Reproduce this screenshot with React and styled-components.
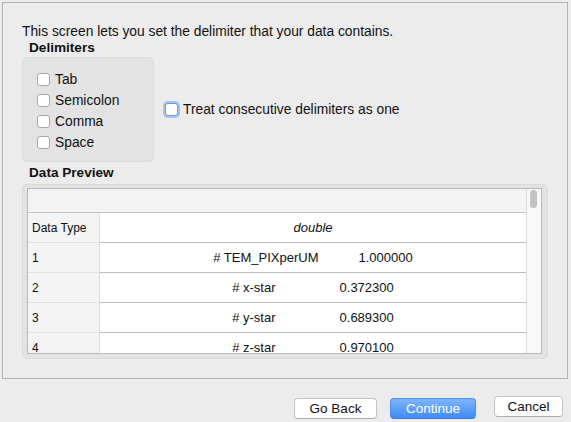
import React from 'react';
import styled, { createGlobalStyle } from 'styled-components';

const GlobalStyle = createGlobalStyle`
  html, body {
    margin: 0;
    padding: 0;
    background: #ececec;
    font-family: "Liberation Sans", Arial, sans-serif;
    color: #111;
  }
`;

const Page = styled.div`
  width: 571px;
  height: 422px;
  overflow: hidden;
  padding: 2px 0 0 2px;
  box-sizing: border-box;
`;

const Panel = styled.div`
  box-sizing: border-box;
  width: 566px;
  height: 377px;
  border: 1px solid #b3b3b3;
  padding: 21px 0 0 19px;
  display: flex;
  flex-direction: column;
`;

const Intro = styled.div`
  font-size: 13.8px;
  line-height: 16px;
`;

const SectionLabel = styled.div`
  font-size: 13.6px;
  font-weight: bold;
  line-height: 16px;
  padding-left: 7px;
`;

const OptionsRow = styled.div`
  display: flex;
  align-items: center;
  margin-top: 1px;
`;

const DelimBox = styled.div`
  box-sizing: border-box;
  width: 132px;
  height: 105px;
  background: #e3e3e3;
  border: 1px solid #dcdcdc;
  border-radius: 5px;
  padding: 15px 0 0 14px;
  display: flex;
  flex-direction: column;
  gap: 8px;
`;

const CheckRow = styled.label`
  display: flex;
  align-items: center;
  gap: 5px;
  font-size: 13.8px;
  line-height: 13px;
  margin-left: ${(p) => p.$indent || 0}px;
`;

const Box = styled.span`
  box-sizing: border-box;
  width: 13px;
  height: 13px;
  background: #fff;
  border: 1px solid ${(p) => (p.$focus ? '#6d9be0' : '#a9a9a9')};
  border-radius: 3px;
  box-shadow: ${(p) => (p.$focus ? '0 0 0 2px rgba(110, 160, 235, 0.55)' : 'none')};
  flex-shrink: 0;
`;

const PreviewLabel = styled(SectionLabel)`
  margin-top: 3px;
`;

const PreviewBox = styled.div`
  box-sizing: border-box;
  width: 526px;
  height: 175px;
  margin-top: 3px;
  background: #e3e3e3;
  border: 1px solid #dadada;
  border-radius: 5px;
  padding: 3px 5px 4px 4px;
`;

const Table = styled.div`
  box-sizing: border-box;
  height: 100%;
  border: 1px solid #b9b9b9;
  display: grid;
  grid-template-columns: 1fr 15px;
  background: #fff;
  overflow: hidden;
`;

const Main = styled.div`
  display: flex;
  flex-direction: column;
  overflow: hidden;
`;

const HeaderRow = styled.div`
  height: 23px;
  flex-shrink: 0;
  background: #f3f3f3;
  border-bottom: 1px solid #c4c4c4;
`;

const Row = styled.div`
  display: grid;
  grid-template-columns: 72px 1fr;
  height: 30px;
  flex-shrink: 0;
`;

const RowHead = styled.div`
  background: #f4f4f4;
  border-right: 1px solid #dedede;
  border-bottom: 1px solid #e2e2e2;
  padding-left: 4px;
  display: flex;
  align-items: center;
  font-size: 12px;
`;

const Cell = styled.div`
  border-bottom: 1px solid #bdbdbd;
  display: flex;
  align-items: center;
  justify-content: center;
  font-size: 13px;
  font-style: ${(p) => (p.$italic ? 'italic' : 'normal')};
`;

const Value = styled.span`
  margin-left: ${(p) => p.$gap}px;
`;

const Scroll = styled.div`
  background: #f8f8f8;
  border-left: 1px solid #dcdcdc;
  padding: 1px 0 0 3px;
`;

const Thumb = styled.div`
  width: 7px;
  height: 18px;
  border-radius: 4px;
  background: #c2c2c2;
`;

const Footer = styled.div`
  display: flex;
  justify-content: flex-end;
  align-items: flex-start;
  padding: 17px 8px 0 0;
`;

const Button = styled.button`
  box-sizing: border-box;
  height: 21px;
  width: ${(p) => p.$w}px;
  margin-top: ${(p) => p.$drop || 0}px;
  margin-left: ${(p) => p.$ml || 0}px;
  padding: 0;
  font-family: "Liberation Sans", Arial, sans-serif;
  font-size: 13.5px;
  border-radius: 4px;
  border: 1px solid ${(p) => (p.$primary ? '#4f8ef0' : '#c4c4c4')};
  border-bottom-color: ${(p) => (p.$primary ? '#3b7be6' : '#aeaeae')};
  background: ${(p) => (p.$primary ? 'linear-gradient(#7fb4fb, #3f8cf4)' : '#fff')};
  color: ${(p) => (p.$primary ? '#fff' : '#111')};
`;

const delimiters = ['Tab', 'Semicolon', 'Comma', 'Space'];

const rows = [
  { n: '1', name: '# TEM_PIXperUM', value: '1.000000', gap: 40 },
  { n: '2', name: '# x-star', value: '0.372300', gap: 64 },
  { n: '3', name: '# y-star', value: '0.689300', gap: 64 },
  { n: '4', name: '# z-star', value: '0.970100', gap: 64 },
];

const App = () => (
  <Page>
    <GlobalStyle />
    <Panel>
      <Intro>This screen lets you set the delimiter that your data contains.</Intro>
      <SectionLabel>Delimiters</SectionLabel>
      <OptionsRow>
        <DelimBox>
          {delimiters.map((d) => (
            <CheckRow key={d}>
              <Box />
              {d}
            </CheckRow>
          ))}
        </DelimBox>
        <CheckRow $indent={11}>
          <Box $focus />
          Treat consecutive delimiters as one
        </CheckRow>
      </OptionsRow>
      <PreviewLabel>Data Preview</PreviewLabel>
      <PreviewBox>
        <Table>
          <Main>
            <HeaderRow />
            <Row>
              <RowHead>Data Type</RowHead>
              <Cell $italic>double</Cell>
            </Row>
            {rows.map((r) => (
              <Row key={r.n}>
                <RowHead>{r.n}</RowHead>
                <Cell>
                  <span>{r.name}</span>
                  <Value $gap={r.gap}>{r.value}</Value>
                </Cell>
              </Row>
            ))}
          </Main>
          <Scroll>
            <Thumb />
          </Scroll>
        </Table>
      </PreviewBox>
    </Panel>
    <Footer>
      <Button $w={83} $drop={2}>Go Back</Button>
      <Button $w={86} $drop={2} $ml={13} $primary>Continue</Button>
      <Button $w={69} $ml={18}>Cancel</Button>
    </Footer>
  </Page>
);

export default App;
